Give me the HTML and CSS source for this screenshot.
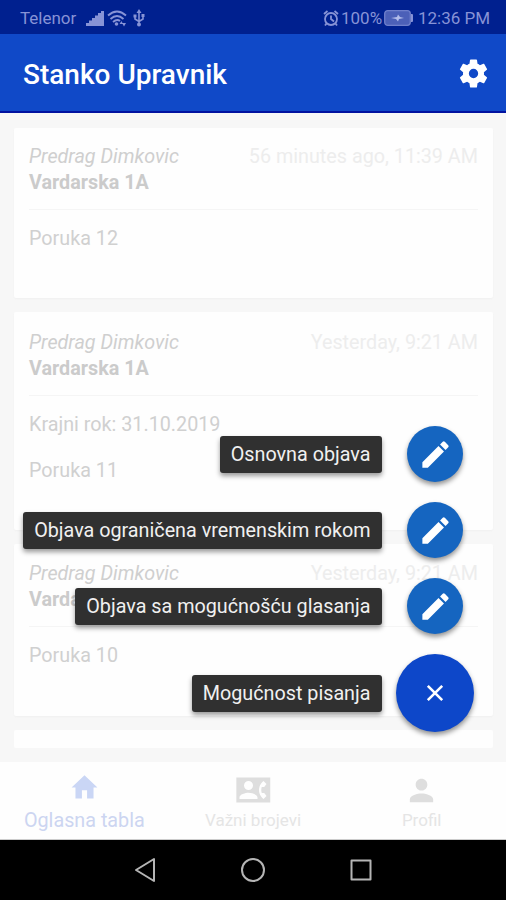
FILE: index.html
```html
<!DOCTYPE html>
<html lang="sr-Latn">
<head>
<meta charset="utf-8">
<title>Stanko Upravnik</title>
<link rel="stylesheet" href="styles.css">
</head>
<body>
<div class="phone">
  <div class="status">
    <span class="carrier">Telenor</span>
    <svg class="signal" width="18" height="16" viewBox="0 0 18 16"><path d="M0 16v-3h3v-2.500h3V8h3V5.500h3V3h3V1h3v15z"/></svg>
    <svg class="wifi" width="20" height="17" viewBox="0 0 20 17"><g fill="none" stroke="currentColor" stroke-width="1.900"><path d="M1 5.500Q10-2.500 19 5.500M3.500 9Q10 3 16.500 9M6 12Q10 8.500 13 11"/></g><circle cx="9.500" cy="14" r="1.800"/><path d="M12.500 14l2-3 1.500 3zM15 13h4l-2 3.500z"/></svg>
    <svg class="usb" width="12" height="18" viewBox="0 0 12 18"><g fill="none" stroke="currentColor" stroke-width="1.600"><path d="M6 3v12M2 7v3l4 2.500L10 10V6"/></g><path d="M6 0l2.500 4h-5zM.5 5.500h3v3h-3zM8.500 5h3v3h-3z"/><circle cx="6" cy="15.500" r="2"/></svg>
    <span class="grow"></span>
    <svg class="alarm" width="16" height="17" viewBox="0 0 16 17"><g fill="none" stroke="currentColor" stroke-width="1.800"><circle cx="8" cy="9" r="6"/><path d="M8 5.500V9l3 2.500M1 4l3.500-3M15 4l-3.500-3M3.500 13.500L2 15.500M12.500 13.500l1.500 2"/></g></svg>
    <span class="percent">100%</span>
    <svg class="battery" width="29" height="16" viewBox="0 0 29 16"><rect x=".7" y=".7" width="25.600" height="14.600" rx="3" fill="#4c60b8" stroke="#6f7fcb" stroke-width="1.300"/><path d="M27 4h1q1 0 1 1v6q0 1-1 1h-1z"/><path d="M7 8l6-1 1-2.500 2 2.500 4 1-5 1-1 2.500-2-2.500z" fill="#b4bdea"/></svg>
    <span class="clock">12:36 PM</span>
  </div>
  <header class="appbar">
    <h1>Stanko Upravnik</h1>
    <svg class="gear" viewBox="0 0 24 24"><path d="M19.140 12.940c.04-.3.060-.61.060-.94 0-.32-.02-.64-.07-.94l2.030-1.580c.18-.14.230-.41.120-.61l-1.920-3.320c-.12-.22-.37-.29-.59-.22l-2.390.96c-.5-.38-1.030-.7-1.620-.94L14.400 2.810c-.04-.24-.24-.41-.48-.41h-3.840c-.24 0-.43.17-.47.410L9.250 5.350c-.59.240-1.130.57-1.620.94l-2.390-.96c-.22-.08-.47 0-.59.220L2.740 8.870c-.12.210-.08.470.120.610l2.030 1.580c-.05.300-.09.630-.09.940s.02.640.070.940l-2.030 1.580c-.18.140-.23.410-.12.610l1.920 3.320c.12.220.37.290.59.220l2.390-.96c.5.380 1.030.7 1.620.94l.36 2.540c.05.240.24.410.48.410h3.840c.24 0 .44-.17.470-.41l.36-2.540c.59-.24 1.130-.56 1.620-.94l2.390.96c.22.080.47 0 .59-.22l1.920-3.320c.12-.22.070-.47-.12-.61zM12 15.200a3.200 3.200 0 1 1 0-6.400 3.200 3.200 0 0 1 0 6.400z"/></svg>
  </header>
  <main class="feed">
    <article class="card first">
      <div class="meta"><span class="author">Predrag Dimkovic</span><span class="time">56 minutes ago, 11:39 AM</span></div>
      <div class="place">Vardarska 1A</div>
      <hr>
      <p>Poruka 12</p>
    </article>
    <article class="card second">
      <div class="meta"><span class="author">Predrag Dimkovic</span><span class="time">Yesterday, 9:21 AM</span></div>
      <div class="place">Vardarska 1A</div>
      <hr>
      <p class="due">Krajni rok: 31.10.2019</p>
      <p>Poruka 11</p>
    </article>
    <article class="card third">
      <div class="meta"><span class="author">Predrag Dimkovic</span><span class="time">Yesterday, 9:21 AM</span></div>
      <div class="place">Vardarska 1A</div>
      <hr>
      <p>Poruka 10</p>
    </article>
    <article class="card last"></article>
  </main>
  <nav class="tabs">
    <div class="tab active">
      <svg width="31" height="33" viewBox="0 0 24 24" preserveAspectRatio="none"><path d="M10 20v-6h4v6h5v-8h3L12 3 2 12h3v8z"/></svg>
      <span>Oglasna tabla</span>
    </div>
    <div class="tab contacts">
      <svg width="36" height="36" viewBox="0 0 24 24"><path fill-rule="evenodd" d="M.9 3.700h22.600v16.600H.9zM9 6a3 3 0 1 0 0 6 3 3 0 0 0 0-6zM3 18h12v-1c0-2-4-3.100-6-3.100S3 15 3 17zM17.850 14c-.22-.63-.35-1.300-.35-2s.13-1.370.35-2h1.640L21 8l-2-2c-1.310.98-2.280 2.370-2.730 4-.18.640-.27 1.310-.27 2s.09 1.360.270 2c.45 1.620 1.420 3.020 2.730 4l2-2-1.510-2z"/></svg>
      <span>Važni brojevi</span>
    </div>
    <div class="tab profile">
      <svg width="35" height="35" viewBox="0 0 24 24"><path d="M12 12c2.210 0 4-1.790 4-4s-1.790-4-4-4-4 1.790-4 4 1.790 4 4 4zm0 2c-2.670 0-8 1.340-8 4v2h16v-2c0-2.660-5.330-4-8-4z"/></svg>
      <span>Profil</span>
    </div>
  </nav>
  <div class="system">
    <svg width="22" height="26" viewBox="0 0 22 26"><path d="M20 2v22L2 13z"/></svg>
    <svg width="26" height="26" viewBox="0 0 26 26"><circle cx="13" cy="13" r="11"/></svg>
    <svg width="22" height="22" viewBox="0 0 22 22"><path d="M1.500 1.500h19v19h-19z"/></svg>
  </div>
  <div class="dial">
    <div class="action"><span class="label">Osnovna objava</span><span class="fab"><svg viewBox="0 0 24 24"><path d="M3 17.250V21h3.750L17.810 9.940l-3.750-3.750zM20.710 7.040a1 1 0 0 0 0-1.410l-2.340-2.340a1 1 0 0 0-1.410 0l-1.830 1.830 3.750 3.750z"/></svg></span></div>
    <div class="action"><span class="label">Objava ograničena vremenskim rokom</span><span class="fab"><svg viewBox="0 0 24 24"><path d="M3 17.250V21h3.750L17.810 9.940l-3.750-3.750zM20.710 7.040a1 1 0 0 0 0-1.410l-2.340-2.340a1 1 0 0 0-1.410 0l-1.830 1.830 3.750 3.750z"/></svg></span></div>
    <div class="action"><span class="label">Objava sa mogućnošću glasanja</span><span class="fab"><svg viewBox="0 0 24 24"><path d="M3 17.250V21h3.750L17.810 9.940l-3.750-3.750zM20.710 7.040a1 1 0 0 0 0-1.410l-2.340-2.340a1 1 0 0 0-1.410 0l-1.830 1.830 3.750 3.750z"/></svg></span></div>
    <div class="action main"><span class="label">Mogućnost pisanja</span><span class="fab close"><svg viewBox="0 0 24 24"><path d="M4.800 4.800l14.400 14.400M19.200 4.800L4.800 19.200"/></svg></span></div>
  </div>
</div>
</body>
</html>
```

FILE: styles.css
```css
* { box-sizing: border-box; }
body { margin: 0; font-family: Roboto, "Liberation Sans", sans-serif; }
.phone { position: relative; width: 506px; height: 900px; display: flex; flex-direction: column; overflow: hidden; background: #f7f7f7; }
.status { height: 34px; flex: none; display: flex; align-items: center; padding: 2px 16px 0 20px; background: #00208f; color: #8793d6; font-size: 17px; white-space: nowrap; }
.status svg { flex: none; fill: currentColor; }
.carrier { width: 66px; }
.wifi { margin-left: 3px; }
.usb { margin-left: 6px; }
.grow { flex: 1; }
.percent { margin-left: 2px; width: 42px; }
.battery { margin: 0 5px 0 1px; }
.clock { width: 72px; }
.appbar { height: 79px; flex: none; display: flex; align-items: center; justify-content: space-between; padding: 5px 15px 0 23px; background: #1049c8; border-bottom: 2px solid #0213a0; color: #fff; }
.appbar h1 { margin: 0; font-size: 28px; line-height: 32px; font-weight: 500; }
.gear { width: 35px; height: 35px; margin-top: -3px; fill: #fff; }
.feed { height: 649px; flex: none; display: flex; flex-direction: column; gap: 14px; padding: 15px 13px 14px 14px; }
.card { flex: none; padding: 16px 15px 0 15px; background: #fefefe; border-radius: 2px; box-shadow: 0 1px 2px #f0f0f0; color: #d0d0d0; font-size: 19.750px; line-height: 26px; }
.first { height: 170px; }
.second { height: 218px; padding-top: 18px; }
.third { height: 172px; padding-top: 17px; }
.last { height: 18px; padding: 0; box-shadow: none; }
.meta { display: flex; justify-content: space-between; white-space: nowrap; }
.author { font-style: italic; color: #cfcfcf; }
.time { color: #ededed; }
.place { font-weight: 700; color: #cbcbcb; }
.card hr { height: 1px; margin: 13px 0 16px; border: 0; background: #f5f5f5; }
.card p { margin: 0; }
.card .due { margin-bottom: 20px; }
.tabs { height: 78px; flex: none; display: flex; background: #fefefe; border-bottom: 1px solid #ccc; }
.tab { flex: 1; display: flex; flex-direction: column; align-items: center; color: #e5e5e5; font-size: 17px; line-height: 24px; }
.tab svg { fill: #dedede; }
.active { color: #ccd5f1; font-size: 19.750px; }
.active svg { fill: #cad6f5; margin: 9px 0 5px; }
.contacts svg { margin: 10px 0 0; }
.profile svg { margin: 11px 0 0; }
.system { flex: 1; display: flex; align-items: center; background: #000; }
.system svg { flex: none; fill: none; stroke: #b5b5b5; stroke-width: 2; stroke-linejoin: round; }
.system svg:nth-child(1) { margin-left: 134px; }
.system svg:nth-child(2) { margin-left: 84px; }
.system svg:nth-child(3) { margin-left: 84px; }
.dial { position: absolute; right: 32px; top: 426px; display: flex; flex-direction: column; align-items: flex-end; gap: 20px; }
.action { height: 56px; display: flex; align-items: center; gap: 25px; padding-right: 11px; }
.main { height: 78px; gap: 14px; padding-right: 0; }
.label { height: 37px; padding: 0 11.500px 0 11px; border-radius: 3px; background: #303030; color: #f0f0f0; font-size: 19.750px; line-height: 38px; white-space: nowrap; box-shadow: 0 3px 5px rgba(0,0,0,.4); }
.fab { width: 56px; height: 56px; display: grid; place-items: center; border-radius: 50%; background: #1565c0; box-shadow: 0 3px 5px rgba(0,0,0,.42); }
.fab svg { width: 35px; height: 35px; fill: #fff; }
.close { width: 78px; height: 78px; background: #0d47c9; }
.close svg { width: 24px; height: 24px; fill: none; stroke: #fff; stroke-width: 2.600; }
```
